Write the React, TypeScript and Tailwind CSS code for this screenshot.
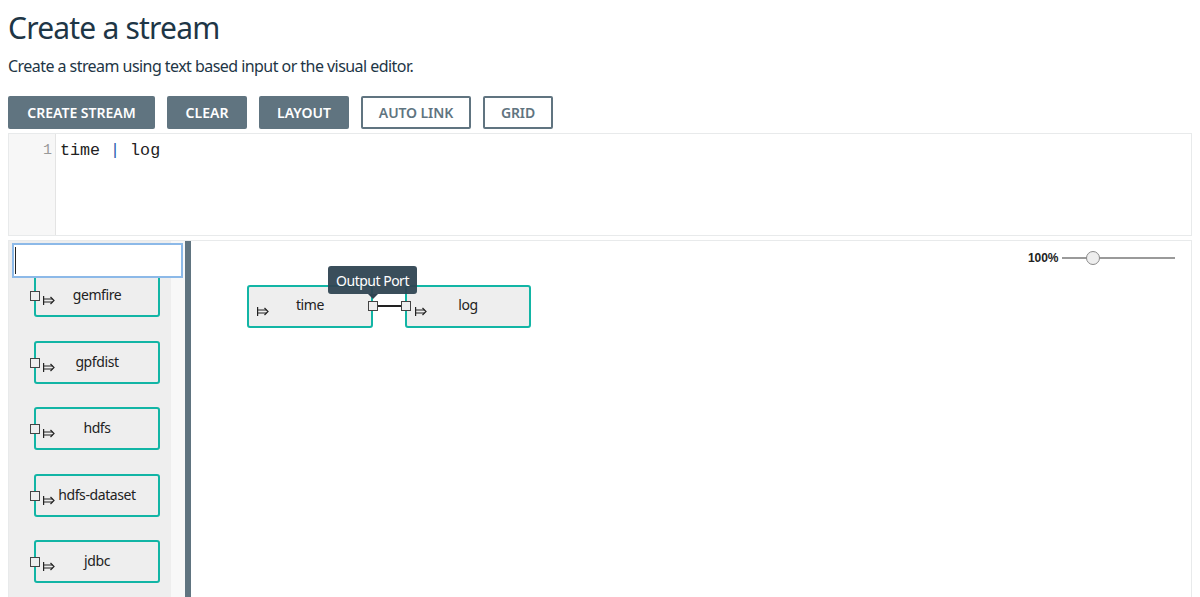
const SANS = "font-['Noto_Sans',sans-serif]";

const PALETTE = ["gemfire", "gpfdist", "hdfs", "hdfs-dataset", "jdbc"];

function SinkIcon({ className }: { className: string }) {
  return (
    <svg className={className} width="12" height="9" viewBox="0 0 12 9" fill="none" stroke="#222" strokeWidth="1.2">
      <path d="M0.6 0V9" />
      <path d="M0.6 3H9.5M0.6 6H9.5" />
      <path d="M7.5 1L11 4.5L7.5 8" />
    </svg>
  );
}

function Port({ className }: { className: string }) {
  return <div className={"absolute h-[10px] w-[10px] border-[1.5px] border-[#444] bg-[#eeeeee] " + className} />;
}

function Button({ label, width, solid }: { label: string; width: string; solid?: boolean }) {
  return (
    <button
      className={
        "h-[33px] rounded-[2px] text-[14px] font-semibold " +
        width +
        " " +
        (solid
          ? "bg-[#607480] text-white"
          : "border-2 border-[#607480] bg-white tracking-[-0.1px] text-[#607480]")
      }
    >
      {label}
    </button>
  );
}

function PaletteNode({ name }: { name: string }) {
  return (
    <div className="relative h-[43px] w-[126px] shrink-0 rounded-[3px] border-2 border-[#12b5a5] bg-[#eeeeee]">
      <div className="pt-[9px] text-center text-[14px] leading-[20px] tracking-[-0.4px] text-[#222]">{name}</div>
      <Port className="left-[-6px] top-[15px]" />
      <SinkIcon className="absolute left-[7px] top-[20px]" />
    </div>
  );
}

function CanvasNode({ name, className }: { name: string; className: string }) {
  return (
    <div className={"absolute h-[43px] w-[126px] rounded-[3px] border-2 border-[#12b5a5] bg-[#eeeeee] " + className}>
      <div className="pt-[8px] text-center text-[14px] leading-[20px] tracking-[-0.4px] text-[#222]">{name}</div>
      <SinkIcon className="absolute left-[8px] top-[20px]" />
    </div>
  );
}

export default function App() {
  return (
    <div className={SANS + " h-[597px] w-[1200px] overflow-hidden bg-white px-2 text-[#1f3544]"}>
      <h1 className="pt-[9px] text-[30px] leading-[38px] tracking-[-0.8px] text-[#1e3646]">Create a stream</h1>
      <p className="mt-[7px] text-[16px] leading-[24px] tracking-[-0.55px] text-[#1e3646]">
        Create a stream using text based input or the visual editor.
      </p>
      <div className="mt-[18px] flex gap-[12px]">
        <Button label="CREATE STREAM" width="w-[147px]" solid />
        <Button label="CLEAR" width="w-[80px]" solid />
        <Button label="LAYOUT" width="w-[90px]" solid />
        <Button label="AUTO LINK" width="w-[110px]" />
        <Button label="GRID" width="w-[70px]" />
      </div>

      <div className="mt-1 flex h-[103px] border border-[#e8eaeb]">
        <div className="w-[47px] border-r border-[#e4e4e4] bg-[#f7f7f7] pr-[3px] pt-[7px] text-right font-['Liberation_Mono',monospace] text-[15px] leading-[20px] text-[#999]">
          1
        </div>
        <div className="pl-[4px] pt-[7px] font-['Liberation_Mono',monospace] text-[16.7px] leading-[20px] text-[#222]">
          time <span className="text-[#2a5db0]">|</span> log
        </div>
      </div>

      <div className="mt-1 flex h-[362px] overflow-hidden border border-[#e8eaeb]">
        <div className="relative flex w-[176px] shrink-0 bg-[#f8f8f8]">
          <div className="h-full w-[162px] bg-[#eeeeee]" />
          <div className="absolute left-0 top-0 flex h-full w-[176px] flex-col gap-[23.5px] overflow-hidden pl-[25px] pt-[33px]">
            {PALETTE.map((name) => (
              <PaletteNode key={name} name={name} />
            ))}
          </div>
          <div className="absolute left-[3px] top-[2px] flex h-[35px] w-[171px] items-center border-2 border-[#8cb9e8] bg-white pl-[1px]">
            <div className="h-[27px] w-px bg-[#222]" />
          </div>
        </div>
        <div className="h-full w-[6px] shrink-0 bg-[#607480]" />
        <div className="relative flex-1 bg-white">
          <CanvasNode name="time" className="left-[56px] top-[44px]" />
          <CanvasNode name="log" className="left-[214px] top-[44px]" />
          <Port className="left-[177px] top-[60px]" />
          <Port className="left-[210px] top-[60px]" />
          <div className="absolute left-[187px] top-[64px] h-[2px] w-[23px] bg-[#222]" />
          <div className="absolute left-[137px] top-[25px] flex h-[28px] w-[89px] items-center justify-center rounded-[3px] bg-[#2f4452]/95 text-[14px] tracking-[-0.5px] text-white">
            Output Port
          </div>
          <div className="absolute left-[177px] top-[53px] h-0 w-0 border-x-[5px] border-t-[5px] border-x-transparent border-t-[#2f4452]" />
          <div className="absolute left-[837px] top-[9px] flex w-[148px] items-center">
            <span className="font-['Liberation_Sans',sans-serif] text-[12px] font-bold leading-[16px] tracking-[-0.1px] text-[#222]">100%</span>
            <div className="relative ml-[4px] h-[2px] w-[113px] bg-[#9a9a9a]">
              <div className="absolute left-[24px] top-[-6px] h-[14px] w-[14px] rounded-full border border-[#8a8a8a] bg-[#eeeeee]" />
            </div>
          </div>
        </div>
      </div>
    </div>
  );
}
